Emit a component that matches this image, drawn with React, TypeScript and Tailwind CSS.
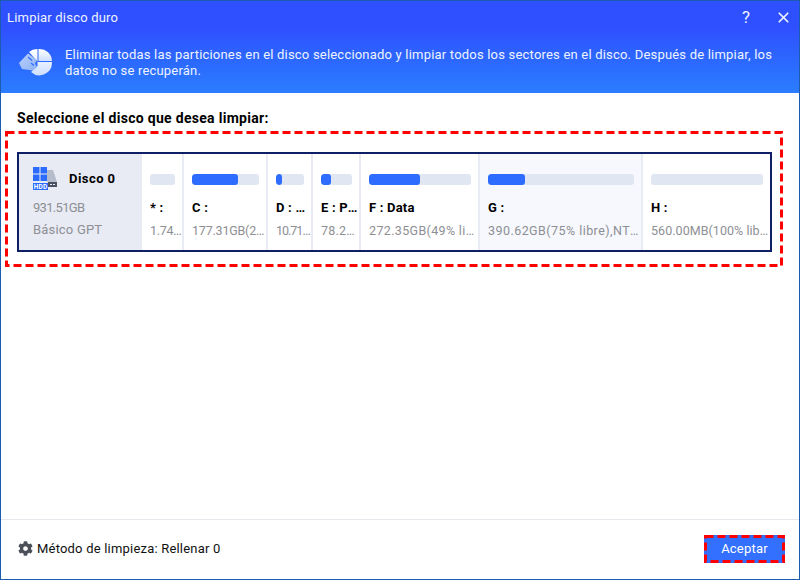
import { FaCog } from "react-icons/fa";
import { X } from "lucide-react";

const parts = [
  { w: "w-[42px]", label: "* :", info: "1.74GB(100% libre)", used: 0, selected: false, fit: "tracking-[-0.3px]" },
  { w: "w-[84px]", label: "C :", info: "177.31GB(25% libre),NTFS", used: 68, selected: false, fit: "tracking-[-0.2px]" },
  { w: "w-[45px]", label: "D : Recovery", info: "10.71GB(90% libre)", used: 20, selected: false, fit: "tracking-[-1px]" },
  { w: "w-[48px]", label: "E : Programs", info: "78.25GB(70% libre)", used: 32, selected: false, fit: "tracking-[0.2px]" },
  { w: "w-[119px]", label: "F : Data", info: "272.35GB(49% libre),NTFS", used: 50, selected: false, fit: "tracking-[0.35px]" },
  { w: "w-[163px]", label: "G :", info: "390.62GB(75% libre),NTFS", used: 25, selected: true, fit: "tracking-[0.45px]" },
  { w: "flex-1", label: "H :", info: "560.00MB(100% libre),NTFS", used: 0, selected: false, fit: "tracking-[0.05px]" },
];

function DashRect() {
  return (
    <svg className="absolute inset-0 w-full h-full pointer-events-none" aria-hidden="true">
      <rect x="1.5" y="1.5" fill="none" stroke="#ff0000" strokeWidth="3" strokeDasharray="8 4" style={{ width: "calc(100% - 3px)", height: "calc(100% - 3px)" }} />
    </svg>
  );
}

function HeaderIcon() {
  return (
    <svg width="36" height="30" viewBox="0 0 36 30" className="shrink-0">
      <defs>
        <linearGradient id="pie" x1="0" y1="0" x2="0" y2="1">
          <stop offset="0" stopColor="#ffffff" />
          <stop offset="1" stopColor="#cfdfff" />
        </linearGradient>
        <linearGradient id="eraser" x1="0" y1="0" x2="1" y2="1">
          <stop offset="0" stopColor="#b9d0fb" />
          <stop offset="1" stopColor="#8fb2f5" />
        </linearGradient>
      </defs>
      <path d="M20.5 3.1A12.5 12.5 0 0 0 12 6L21 16H34.9A12.5 12.5 0 0 1 14 26L20.5 20Z" fill="url(#pie)" />
      <path d="M21.5 3A12.5 12.5 0 0 1 35 15H21.5Z" fill="url(#pie)" />
      <path d="M2 17L11 7.5L20 14L18 17.5L20 21L16 24.5L5 23Z" fill="url(#eraser)" />
      <path d="M11 11L15 14.5M14 17L17 19.5" stroke="#2f6bff" strokeWidth="1.2" fill="none" />
    </svg>
  );
}

function HddIcon() {
  return (
    <svg width="25" height="24" viewBox="0 0 25 24" className="shrink-0">
      <path d="M14 3H20L24 15H14Z" fill="#b5bccb" />
      <rect x="0" y="0" width="6.5" height="6.5" fill="#2b6cff" />
      <rect x="7.5" y="0" width="6.5" height="6.5" fill="#2b6cff" />
      <rect x="0" y="7.5" width="6.5" height="6.5" fill="#2b6cff" />
      <rect x="7.5" y="7.5" width="6.5" height="6.5" fill="#2b6cff" />
      <rect x="0" y="16" width="15" height="7" fill="#2b6cff" />
      <rect x="15" y="15" width="9" height="5" fill="#4a5261" />
      <rect x="17" y="17" width="2" height="1" fill="#e8ebf3" />
      <rect x="20" y="17" width="2" height="1" fill="#e8ebf3" />
      <text x="7.5" y="22" textAnchor="middle" fontSize="6.5" fontWeight="700" fill="#fff" fontFamily="Roboto, sans-serif">HDD</text>
    </svg>
  );
}

export default function App() {
  return (
    <div className="w-[800px] h-[580px] flex flex-col bg-white border border-[#1b5bb0] overflow-hidden font-['Roboto',sans-serif] tracking-[0.2px]">
      <div className="h-[92px] shrink-0 flex flex-col bg-gradient-to-b from-[#2f50ff] from-30% to-[#2b7dff] text-[#eef3ff]">
        <div className="h-[33px] flex items-center pl-[6px]">
          <span className="text-[13px] flex-1">Limpiar disco duro</span>
          <span className="text-[17px] w-[14px] text-center mr-[22px] leading-none">?</span>
          <X size={17} strokeWidth={2.4} className="mr-[7px]" />
        </div>
        <div className="flex items-start pl-[16px] mt-[12px]">
          <HeaderIcon />
          <p className="ml-[12px] w-[725px] text-[13px] leading-[16px] pt-[1px]">
            Eliminar todas las particiones en el disco seleccionado y limpiar todos los sectores en el disco. Después de limpiar, los datos no se recuperán.
          </p>
        </div>
      </div>

      <div className="flex-1 flex flex-col">
        <div className="pl-[16px] pt-[16px] h-[38px] text-[14px] font-bold text-black leading-[18px] tracking-[0.3px]">Seleccione el disco que desea limpiar:</div>
        <div className="relative ml-[4px] w-[778px] h-[136px] pl-[12px] pt-[21px]">
          <DashRect />
          <div className="w-[755px] h-[100px] border-2 border-[#0f1f66] flex">
            <div className="w-[123px] shrink-0 bg-[#e8ebf3] pl-[14px] pt-[13px] text-[#8d8f94] text-[13px]">
              <div className="flex items-center h-[24px]">
                <HddIcon />
                <span className="ml-[11px] text-[13px] font-bold text-black tracking-[0.45px]">Disco 0</span>
              </div>
              <div className="mt-[9px] leading-[16px] tracking-[-0.7px]">931.51GB</div>
              <div className="mt-[6px] leading-[16px]">Básico GPT</div>
            </div>
            {parts.map((p) => (
              <div
                key={p.label}
                className={`${p.w} min-w-0 border-r-2 last:border-r-0 border-[#e8ebf3] pl-[8px] pt-[20px] ${p.selected ? "bg-[#f6f8fe]" : "bg-white"}`}
              >
                <div className="h-[11px] mr-[7px] rounded-[3px] bg-[#e0e6f2] overflow-hidden">
                  <div className="h-full rounded-[3px] bg-[#2e6bff]" style={{ width: `${p.used}%` }} />
                </div>
                <div className="mt-[15px] text-[13px] font-bold text-black leading-[16px] truncate">{p.label}</div>
                <div className={`mt-[7px] text-[12.5px] text-[#8d8f94] leading-[16px] truncate ${p.fit}`}>{p.info}</div>
              </div>
            ))}
          </div>
        </div>
        <div className="flex-1" />
        <div className="h-[60px] shrink-0 border-t border-[#e6e8ee] flex items-center pl-[17px] pr-[14px] pb-[2px]">
          <FaCog className="text-[#4b4f57] text-[15px] mr-[4px]" />
          <span className="flex-1 text-[13px] text-[#111]">Método de limpieza: Rellenar 0</span>
          <button className="relative w-[81px] h-[28px] bg-[#3370ff] text-white text-[13px]">
            Aceptar
            <DashRect />
          </button>
        </div>
      </div>
    </div>
  );
}
